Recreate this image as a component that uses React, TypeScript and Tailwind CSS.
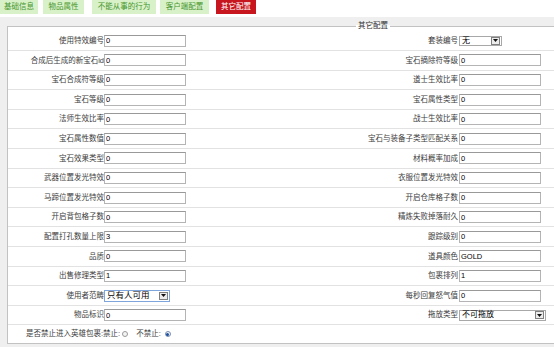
import React from "react";

function Field({ value }: { value: string }) {
  return (
    <input
      readOnly
      value={value}
      className="block w-[82px] h-[12px] border border-[#b4b4b4] border-t-[#999999] bg-white px-[1px] text-[7.5px] leading-none text-black outline-none"
    />
  );
}

function Arrow() {
  return (
    <span className="flex w-[9px] h-[8px] items-center justify-center border border-[#808080] bg-[#ececec]">
      <svg width="5" height="3" viewBox="0 0 5 3">
        <path d="M0 0H5L2.5 3Z" fill="#111" />
      </svg>
    </span>
  );
}

type Row = {
  l: string;
  lv?: string;
  lsel?: boolean;
  r: string;
  rv?: string;
  rsel?: "set" | "drag";
};

const rows: Row[] = [
  { l: "使用特效编号", lv: "0", r: "套装编号", rsel: "set" },
  { l: "合成后生成的新宝石id", lv: "0", r: "宝石摘除符等级", rv: "0" },
  { l: "宝石合成符等级", lv: "0", r: "道士生效比率", rv: "0" },
  { l: "宝石等级", lv: "0", r: "宝石属性类型", rv: "0" },
  { l: "法师生效比率", lv: "0", r: "战士生效比率", rv: "0" },
  { l: "宝石属性数值", lv: "0", r: "宝石与装备子类型匹配关系", rv: "0" },
  { l: "宝石效果类型", lv: "0", r: "材料概率加成", rv: "0" },
  { l: "武器位置发光特效", lv: "0", r: "衣服位置发光特效", rv: "0" },
  { l: "马蹄位置发光特效", lv: "0", r: "开启仓库格子数", rv: "0" },
  { l: "开启背包格子数", lv: "0", r: "精炼失败掉落耐久", rv: "0" },
  { l: "配置打孔数量上限", lv: "3", r: "跟踪级别", rv: "0" },
  { l: "品质", lv: "0", r: "道具颜色", rv: "GOLD" },
  { l: "出售修理类型", lv: "1", r: "包裹排列", rv: "1" },
  { l: "使用者范畴", lsel: true, r: "每秒回复怒气值", rv: "0" },
  { l: "物品标识", lv: "0", r: "拖放类型", rsel: "drag" },
];

export default function App() {
  return (
    <div className="w-[554px] h-[347px] overflow-hidden bg-white font-['Liberation_Sans','Noto_Sans_CJK_SC',sans-serif] text-[7.5px] leading-none text-[#3c3c3c]">
      {/* tabs */}
      <div className="flex h-[14px]">
        <div className="flex w-[38px] items-center justify-center bg-[#d9f1c9] text-[#46962f]">基础信息</div>
        <div className="ml-[5px] flex w-[41px] items-center justify-center bg-[#d9f1c9] text-[#46962f]">物品属性</div>
        <div className="ml-[8px] flex w-[64px] items-center justify-center bg-[#d9f1c9] text-[#46962f]">不能从事的行为</div>
        <div className="ml-[4px] flex w-[49px] items-center justify-center bg-[#d9f1c9] text-[#46962f]">客户端配置</div>
        <div className="ml-[7px] flex w-[40px] items-center justify-center bg-[#c8161e] text-white">其它配置</div>
      </div>

      <div className="mt-[3px] h-[330px] bg-[#efefef] pl-[7px] pt-[9px]">
        <div className="relative h-[318px] border-t border-l border-b border-[#c2c2c2] bg-white pt-[4.5px]">
          <span className="absolute left-[348px] top-[-6px] h-[9px] flex items-center bg-[linear-gradient(#efefef_50%,#ffffff_50%)] px-[2px] text-[#333]">
            其它配置
          </span>

          {rows.map((row, i) => (
            <div key={i} className="flex h-[19.6px] items-center border-b border-[#e2e2e2]">
              <div className="w-[96px] shrink-0 text-right whitespace-nowrap">{row.l}</div>
              {row.lsel ? (
                <div className="flex w-[66px] h-[12px] items-center justify-between border border-[#7ea6dc] bg-white pl-[2px] pr-[1px] text-[8.5px] text-black">
                  <span>只有人可用</span>
                  <Arrow />
                </div>
              ) : (
                <Field value={row.lv ?? ""} />
              )}
              {row.lsel ? <div className="w-[16px] shrink-0" /> : null}
              <div className="w-[273px] shrink-0 pr-[1px] text-right whitespace-nowrap">{row.r}</div>
              {row.rsel === "set" ? (
                <div className="flex w-[43px] h-[10px] items-center justify-between border border-[#a8a8a8] bg-white pl-[2px] pr-[1px] text-[8px] text-black">
                  <span>无</span>
                  <Arrow />
                </div>
              ) : row.rsel === "drag" ? (
                <div className="flex w-[87px] h-[11px] items-center justify-between border border-[#a8a8a8] bg-white pl-[2px] pr-[1px] text-[8px] text-black">
                  <span>不可拖放</span>
                  <Arrow />
                </div>
              ) : (
                <Field value={row.rv ?? ""} />
              )}
            </div>
          ))}

          <div className="flex h-[17.5px] items-center pl-[18px]">
            <span>是否禁止进入英雄包裹:禁止:</span>
            <span className="ml-[2px] block w-[6px] h-[6px] rounded-full border border-[#9a9a9a] bg-[#f4f4f4]" />
            <span className="ml-[8px]">不禁止:</span>
            <span className="ml-[4px] flex w-[6px] h-[6px] items-center justify-center rounded-full border border-[#7a8fb0] bg-[#eef3fb]">
              <span className="block w-[3px] h-[3px] rounded-full bg-[#1d4f9c]" />
            </span>
          </div>
        </div>
      </div>
    </div>
  );
}
